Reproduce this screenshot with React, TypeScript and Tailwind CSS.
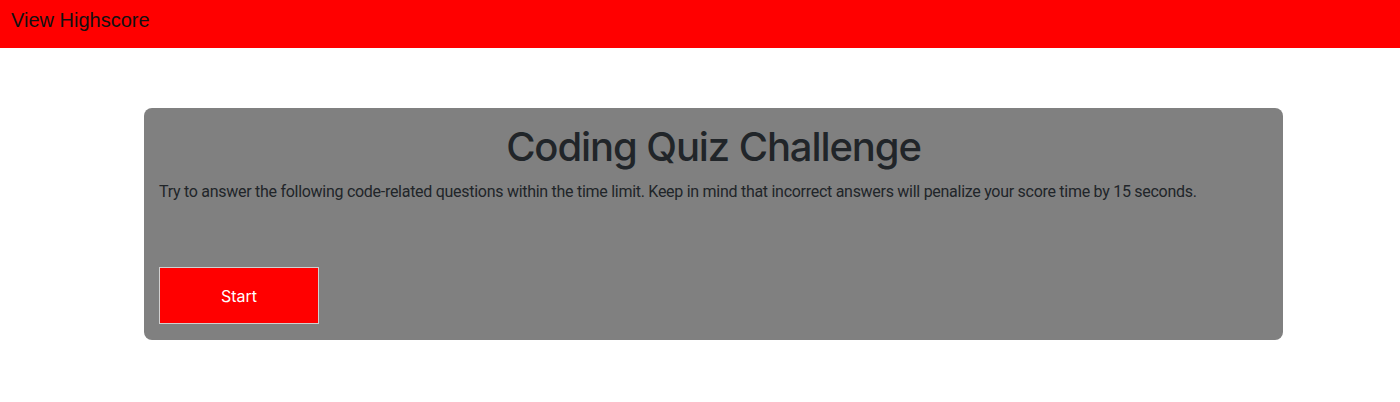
import React from 'react';

const App: React.FC = () => {
  return (
    <div className="min-h-screen bg-white">
      {/* Header */}
      <header className="h-12 bg-[#ff0000] flex items-start">
        <a className="pl-[11px] pt-[8px] text-[20px] leading-[24px] text-[#111] font-['Liberation_Sans',Arial,sans-serif]">
          View Highscore
        </a>
      </header>

      <main className="pt-[60px]">
        <div className="ml-[144px] w-[1139px] h-[232px] rounded-lg bg-[#808080] p-[15px] font-['Inter',sans-serif] text-[#212529]">
          <h1 className="text-center text-[40px] leading-[48px] font-medium tracking-[-1.1px] mb-[9px]">Coding Quiz Challenge</h1>
          <p className="text-base leading-6 whitespace-nowrap tracking-[-0.28px] font-['Roboto',sans-serif]">
            Try to answer the following code-related questions within the time limit. Keep in mind that incorrect answers will penalize your score time by 15 seconds.
          </p>
          <button className="mt-[63px] w-[160px] h-[57px] bg-[#ff0000] border border-[#d0d0d0] text-white text-base">
            Start
          </button>
        </div>
      </main>
    </div>
  );
};

export default App;
